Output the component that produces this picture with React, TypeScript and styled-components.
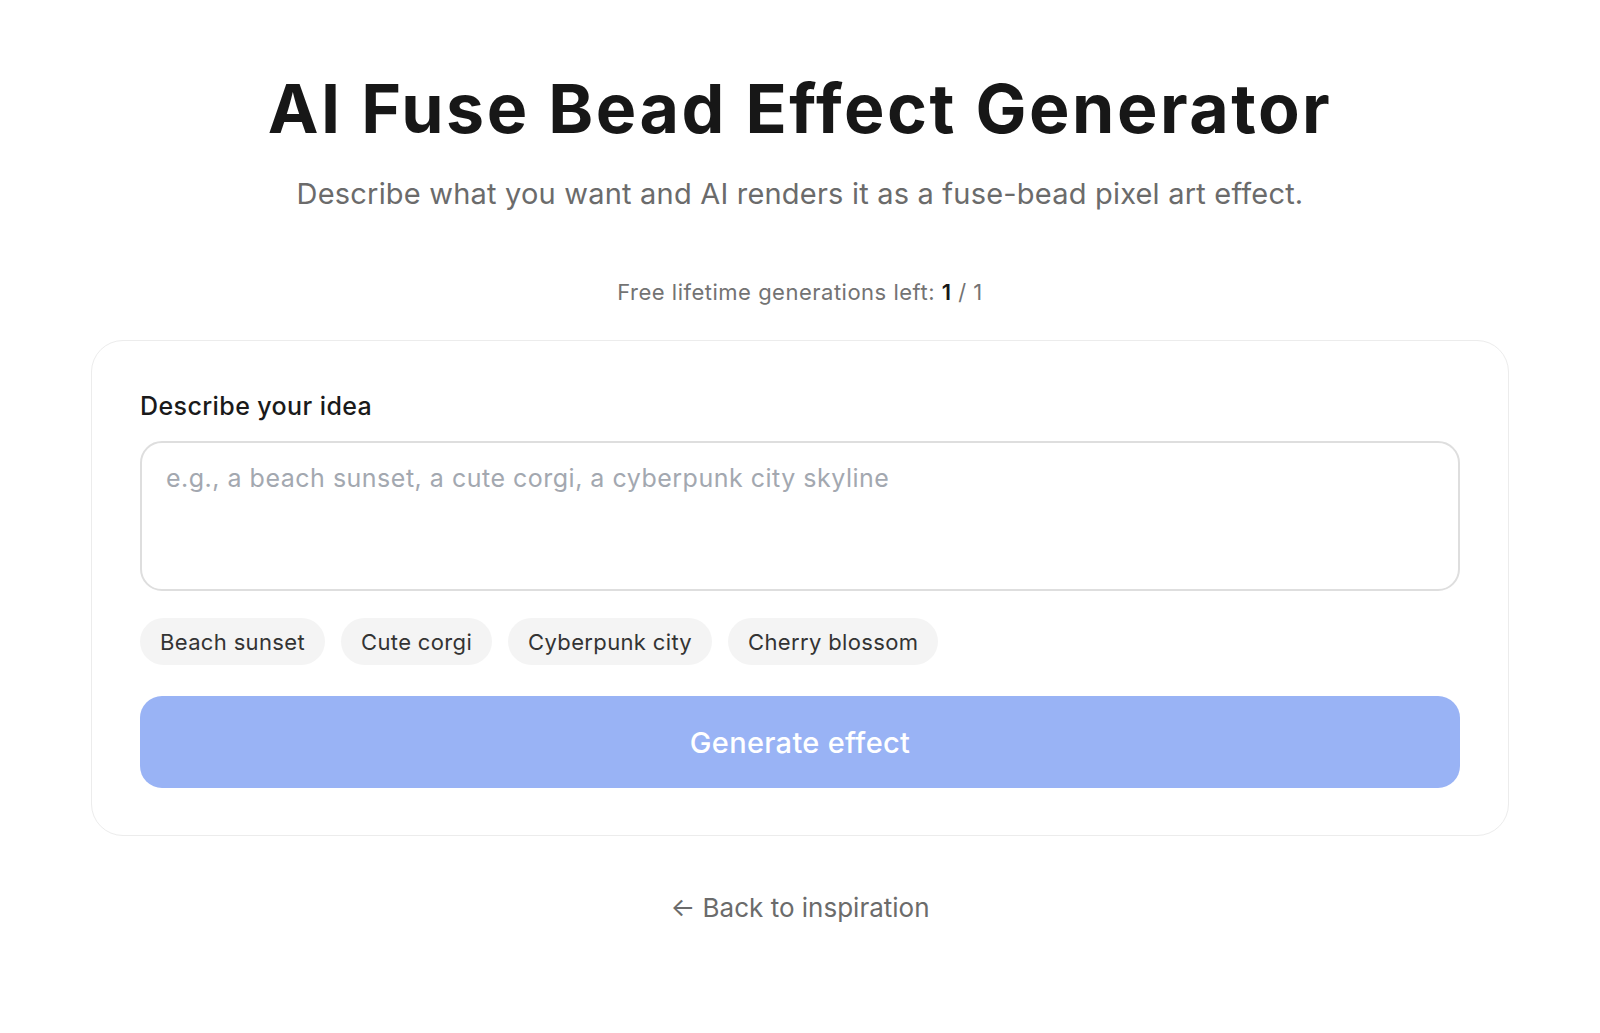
import styled, { createGlobalStyle } from "styled-components";

const GlobalStyle = createGlobalStyle`
  * {
    box-sizing: border-box;
  }

  body {
    margin: 0;
    background: #ffffff;
    font-family: Inter, "Noto Sans", "Liberation Sans", sans-serif;
    color: #171717;
  }
`;

const Page = styled.main`
  width: 1418px;
  margin: 0 auto;
  padding-top: 68px;
  display: flex;
  flex-direction: column;
  align-items: center;
`;

const Title = styled.h1`
  margin: 0;
  font-size: 68px;
  line-height: 1.2;
  font-weight: 700;
  letter-spacing: 2.5px;
  color: #171717;
`;

const Subtitle = styled.p`
  margin: 24px 0 0;
  font-size: 29px;
  line-height: 1.4;
  letter-spacing: 0.2px;
  color: #6b6b6b;
`;

const Quota = styled.div`
  margin-top: 63px;
  font-size: 22px;
  line-height: 1.4;
  letter-spacing: 0.5px;
  color: #737373;

  strong {
    font-weight: 600;
    color: #171717;
  }
`;

const Card = styled.section`
  width: 100%;
  margin-top: 32px;
  padding: 49px 48px 47px;
  border: 1.5px solid #ececec;
  border-radius: 32px;
  display: flex;
  flex-direction: column;
`;

const Label = styled.label`
  font-size: 25px;
  line-height: 1.3;
  font-weight: 500;
  letter-spacing: 0.4px;
  color: #1a1a1a;
`;

const Prompt = styled.textarea`
  margin-top: 19px;
  height: 150px;
  padding: 18px 24px;
  border: 2px solid #dedede;
  border-radius: 22px;
  resize: none;
  font-family: inherit;
  font-size: 25px;
  line-height: 1.4;
  letter-spacing: 0.5px;
  color: #171717;
  outline: none;

  &::placeholder {
    color: #a3a8b0;
  }
`;

const Chips = styled.div`
  margin-top: 27px;
  display: flex;
  gap: 16px;
`;

const Chip = styled.button`
  height: 47px;
  padding: 0 20px;
  border: none;
  border-radius: 999px;
  background: #f4f4f4;
  font-family: inherit;
  font-size: 22px;
  letter-spacing: 0.35px;
  color: #333333;
  cursor: pointer;
`;

const GenerateButton = styled.button`
  margin-top: 31px;
  height: 92px;
  border: none;
  border-radius: 22px;
  background: #99b3f5;
  font-family: inherit;
  font-size: 29px;
  font-weight: 500;
  letter-spacing: 0.3px;
  color: #ffffff;
  cursor: not-allowed;
`;

const BackLink = styled.a`
  margin-top: 54px;
  font-size: 26px;
  line-height: 1.4;
  color: #6b6b6b;
  text-decoration: none;
`;

const ideas = ["Beach sunset", "Cute corgi", "Cyberpunk city", "Cherry blossom"];

export default function App() {
  return (
    <>
      <GlobalStyle />
      <Page>
        <Title>AI Fuse Bead Effect Generator</Title>
        <Subtitle>
          Describe what you want and AI renders it as a fuse-bead pixel art effect.
        </Subtitle>
        <Quota>
          Free lifetime generations left: <strong>1</strong> / 1
        </Quota>
        <Card>
          <Label htmlFor="idea">Describe your idea</Label>
          <Prompt
            id="idea"
            placeholder="e.g., a beach sunset, a cute corgi, a cyberpunk city skyline"
          />
          <Chips>
            {ideas.map((idea) => (
              <Chip key={idea}>{idea}</Chip>
            ))}
          </Chips>
          <GenerateButton disabled>Generate effect</GenerateButton>
        </Card>
        <BackLink href="#">← Back to inspiration</BackLink>
      </Page>
    </>
  );
}
